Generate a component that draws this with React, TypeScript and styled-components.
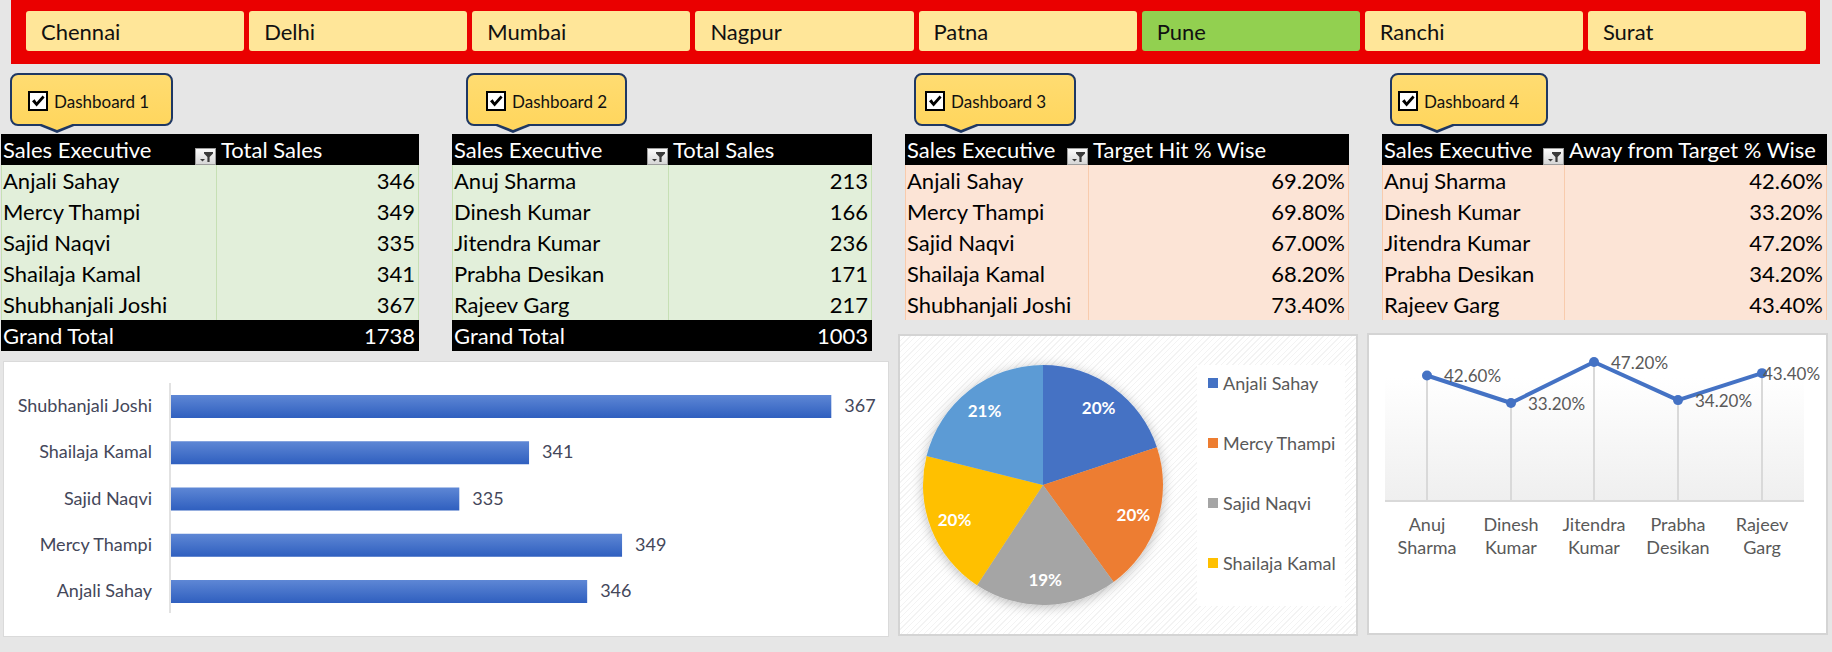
import React from "react";
import styled, { createGlobalStyle } from "styled-components";

const GlobalStyle = createGlobalStyle`
  html, body { margin: 0; padding: 0; }
  body { background: #e6e6e6; font-family: Lato, "Open Sans", sans-serif; }
`;

const Page = styled.div`
  width: 1832px;
  height: 652px;
  background: #e6e6e6;
  overflow: hidden;
`;

/* ---------- top city slicer ---------- */
const CityBar = styled.nav`
  margin-left: 11px;
  width: 1809px;
  height: 64px;
  box-sizing: border-box;
  background: #ea0000;
  padding: 11px 14px 0 15px;
  display: flex;
  gap: 5px;
`;

const CityButton = styled.div<{ $active?: boolean }>`
  flex: 1;
  height: 40px;
  box-sizing: border-box;
  border-radius: 3px;
  background: ${(p) => (p.$active ? "#92d050" : "#ffe699")};
  display: flex;
  align-items: center;
  padding-left: 15px;
  font-size: 22px;
  color: #111;
`;

/* ---------- layout ---------- */
const Main = styled.div`
  display: flex;
  align-items: flex-start;
  margin-top: 9px;
  padding-left: 1px;
`;

const Column = styled.div<{ $w: number; $ml?: number }>`
  width: ${(p) => p.$w}px;
  margin-left: ${(p) => p.$ml ?? 0}px;
  flex-shrink: 0;
  display: flex;
  flex-direction: column;
`;

const TablePair = styled.div`
  display: flex;
  gap: 33px;
`;

const CalloutSlot = styled.div<{ $pl: number }>`
  height: 61px;
  padding-left: ${(p) => p.$pl}px;
  box-sizing: border-box;
`;

/* ---------- callout ---------- */
const Bubble = styled.div<{ $w: number; $pl: number }>`
  position: relative;
  width: ${(p) => p.$w}px;
  height: 53px;
  box-sizing: border-box;
  border: 2px solid #1f3864;
  border-radius: 8px;
  background: linear-gradient(#ffdc72, #ffd65e);
  display: flex;
  align-items: center;
  gap: 6px;
  padding: 3px 0 0 ${(p) => p.$pl}px;
  font-size: 17px;
  color: #111;
  &::before {
    content: "";
    position: absolute;
    left: 23px;
    bottom: -9px;
    border-left: 22px solid transparent;
    border-right: 22px solid transparent;
    border-top: 9px solid #1f3864;
  }
  &::after {
    content: "";
    position: absolute;
    left: 27px;
    bottom: -6px;
    border-left: 18px solid transparent;
    border-right: 18px solid transparent;
    border-top: 7px solid #ffd65e;
  }
`;

const CheckBox = styled.span`
  width: 20px;
  height: 20px;
  box-sizing: border-box;
  border: 2px solid #000;
  background: #fff;
  display: flex;
  align-items: center;
  justify-content: center;
  flex-shrink: 0;
`;

const Callout = ({ label, w, pl }: { label: string; w: number; pl: number }) => (
  <Bubble $w={w} $pl={pl}>
    <CheckBox>
      <svg width="16" height="16" viewBox="0 0 16 16">
        <path d="M2 8.2 L4.6 6.2 L6.6 9.2 L12.6 2.4 L14.6 4.4 L6.6 13.4 Z" fill="#000" />
      </svg>
    </CheckBox>
    <span>{label}</span>
  </Bubble>
);

/* ---------- pivot tables ---------- */
type Tone = "green" | "peach";
const tones: Record<Tone, { bg: string; line: string }> = {
  green: { bg: "#e2efda", line: "#c6e0b4" },
  peach: { bg: "#fce4d6", line: "#f8cbad" },
};

const TableBox = styled.div<{ $w: number; $ml?: number }>`
  width: ${(p) => p.$w}px;
  margin-left: ${(p) => p.$ml ?? 0}px;
  font-size: 22px;
  color: #000;
`;

const Row = styled.div<{ $cols: string }>`
  display: grid;
  grid-template-columns: ${(p) => p.$cols};
  height: 31px;
  line-height: 31px;
`;

const HeadRow = styled(Row)`
  background: #000;
  color: #fff;
`;

const BodyRow = styled(Row)<{ $tone: Tone }>`
  background: ${(p) => tones[p.$tone].bg};
  box-shadow: inset 1px 0 ${(p) => tones[p.$tone].line}, inset -1px 0 ${(p) => tones[p.$tone].line};
`;

const TotalRow = styled(Row)`
  background: #000;
  color: #fff;
`;

const NameCell = styled.div<{ $line?: string }>`
  padding-left: 2px;
  white-space: nowrap;
  overflow: hidden;
  border-right: 1px solid ${(p) => p.$line ?? "transparent"};
`;

const ValueCell = styled.div`
  text-align: right;
  padding-right: 4px;
  white-space: nowrap;
`;

const HeadName = styled.div`
  display: flex;
  align-items: flex-end;
  justify-content: space-between;
  padding: 0 1px 6px 2px;
  white-space: nowrap;
`;

const HeadLabel = styled.span`
  line-height: 31px;
  align-self: center;
`;

const HeadTitle = styled.div`
  padding-left: 4px;
  white-space: nowrap;
  overflow: hidden;
`;

const FilterButton = styled.span`
  width: 21px;
  height: 17px;
  box-sizing: border-box;
  border: 1px solid #9c9c9c;
  background: linear-gradient(#fbfbfb, #d6d6d6);
  display: flex;
  align-items: center;
  justify-content: center;
`;

const FilterIcon = () => (
  <FilterButton>
    <svg width="19" height="15" viewBox="0 0 19 15">
      <polygon points="8,3 17,3 17,4.6 13.6,8 13.6,13 11.4,13 11.4,8 8,4.6" fill="#3a3a3a" />
      <polygon points="4,10 9,10 6.5,12.6" fill="#3a3a3a" />
    </svg>
  </FilterButton>
);

type TableProps = {
  w: number;
  ml?: number;
  c1: number;
  title: string;
  tone: Tone;
  rows: [string, string][];
  total?: string;
};

const PivotTable = ({ w, ml, c1, title, tone, rows, total }: TableProps) => {
  const cols = `${c1}px 1fr`;
  return (
    <TableBox $w={w} $ml={ml}>
      <HeadRow $cols={cols}>
        <HeadName>
          <HeadLabel>Sales Executive</HeadLabel>
          <FilterIcon />
        </HeadName>
        <HeadTitle>{title}</HeadTitle>
      </HeadRow>
      {rows.map(([n, v]) => (
        <BodyRow key={n} $cols={cols} $tone={tone}>
          <NameCell $line={tones[tone].line}>{n}</NameCell>
          <ValueCell>{v}</ValueCell>
        </BodyRow>
      ))}
      {total && (
        <TotalRow $cols={cols}>
          <NameCell>Grand Total</NameCell>
          <ValueCell>{total}</ValueCell>
        </TotalRow>
      )}
    </TableBox>
  );
};

/* ---------- chart panels ---------- */
const BarPanel = styled.div`
  margin: 10px 0 0 2px;
  width: 886px;
  height: 276px;
  box-sizing: border-box;
  background: #fff;
  border: 1px solid #dadada;
`;

const PiePanel = styled.div`
  margin-top: 14px;
  width: 460px;
  height: 302px;
  box-sizing: border-box;
  border: 2px solid #d4d4d4;
  background: repeating-linear-gradient(135deg, #ffffff 0 3px, #f3f3f3 3px 4px);
  display: flex;
  align-items: flex-start;
`;

const LinePanel = styled.div`
  margin-top: 13px;
  width: 461px;
  height: 302px;
  box-sizing: border-box;
  border: 2px solid #d4d4d4;
  background: #fff;
`;

const ChartSvg = styled.svg`
  display: block;
  overflow: visible;
`;

const AxisText = styled.text<{ $muted?: boolean }>`
  font-family: Lato, "Open Sans", sans-serif;
  font-size: 18px;
  fill: ${(p) => (p.$muted ? "#595959" : "#44475a")};
`;

const DataText = styled.text`
  font-family: Lato, "Open Sans", sans-serif;
  font-size: 17px;
  fill: #595959;
`;

const SliceText = styled.text`
  font-family: Lato, "Open Sans", sans-serif;
  font-size: 17px;
  font-weight: 700;
  fill: #fff;
`;

const Legend = styled.div`
  margin-top: 29px;
  width: 148px;
  height: 241px;
  box-sizing: border-box;
  background: #fff;
  padding: 6px 0 0 11px;
  display: flex;
  flex-direction: column;
  gap: 36px;
`;

const LegendItem = styled.div`
  height: 24px;
  display: flex;
  align-items: center;
  gap: 5px;
  font-size: 18px;
  color: #595959;
  white-space: nowrap;
`;

const Swatch = styled.span<{ $c: string }>`
  width: 10px;
  height: 10px;
  background: ${(p) => p.$c};
  flex-shrink: 0;
`;

/* ---------- data ---------- */
const cities = ["Chennai", "Delhi", "Mumbai", "Nagpur", "Patna", "Pune", "Ranchi", "Surat"];

const t1: [string, string][] = [
  ["Anjali Sahay", "346"],
  ["Mercy Thampi", "349"],
  ["Sajid Naqvi", "335"],
  ["Shailaja Kamal", "341"],
  ["Shubhanjali Joshi", "367"],
];
const t2: [string, string][] = [
  ["Anuj Sharma", "213"],
  ["Dinesh Kumar", "166"],
  ["Jitendra Kumar", "236"],
  ["Prabha Desikan", "171"],
  ["Rajeev Garg", "217"],
];
const t3: [string, string][] = [
  ["Anjali Sahay", "69.20%"],
  ["Mercy Thampi", "69.80%"],
  ["Sajid Naqvi", "67.00%"],
  ["Shailaja Kamal", "68.20%"],
  ["Shubhanjali Joshi", "73.40%"],
];
const t4: [string, string][] = [
  ["Anuj Sharma", "42.60%"],
  ["Dinesh Kumar", "33.20%"],
  ["Jitendra Kumar", "47.20%"],
  ["Prabha Desikan", "34.20%"],
  ["Rajeev Garg", "43.40%"],
];

const barData: [string, number][] = [
  ["Shubhanjali Joshi", 367],
  ["Shailaja Kamal", 341],
  ["Sajid Naqvi", 335],
  ["Mercy Thampi", 349],
  ["Anjali Sahay", 346],
];

const pieData = [
  { name: "Anjali Sahay", v: 346, c: "#4472c4" },
  { name: "Mercy Thampi", v: 349, c: "#ed7d31" },
  { name: "Sajid Naqvi", v: 335, c: "#a5a5a5" },
  { name: "Shailaja Kamal", v: 341, c: "#ffc000" },
  { name: "Shubhanjali Joshi", v: 367, c: "#5b9bd5" },
];

const lineData = [
  { top: "Anuj", bottom: "Sharma", v: 42.6, label: "42.60%" },
  { top: "Dinesh", bottom: "Kumar", v: 33.2, label: "33.20%" },
  { top: "Jitendra", bottom: "Kumar", v: 47.2, label: "47.20%" },
  { top: "Prabha", bottom: "Desikan", v: 34.2, label: "34.20%" },
  { top: "Rajeev", bottom: "Garg", v: 43.4, label: "43.40%" },
];

/* ---------- charts ---------- */
const BarChart = () => (
  <BarPanel>
    <ChartSvg width="884" height="274">
      <defs>
        <linearGradient id="barGrad" x1="0" y1="0" x2="0" y2="1">
          <stop offset="0" stopColor="#5e87d5" />
          <stop offset="1" stopColor="#2f5fbf" />
        </linearGradient>
      </defs>
      <line x1="166" y1="21" x2="166" y2="251" stroke="#d9d9d9" strokeWidth="1.5" />
      {barData.map(([n, v], i) => {
        const y = 33 + i * 46.25;
        const w = (v - 310.2) * 11.625;
        return (
          <g key={n}>
            <rect x={167} y={y} width={w} height={23} fill="url(#barGrad)" />
            <AxisText x={148} y={y + 10} textAnchor="end" dominantBaseline="central">
              {n}
            </AxisText>
            <AxisText x={167 + w + 13} y={y + 10} dominantBaseline="central">
              {v}
            </AxisText>
          </g>
        );
      })}
    </ChartSvg>
  </BarPanel>
);

const polar = (cx: number, cy: number, r: number, a: number) => {
  const rad = (a * Math.PI) / 180;
  return [cx + r * Math.sin(rad), cy - r * Math.cos(rad)];
};

const PieChart = () => {
  const total = pieData.reduce((s, d) => s + d.v, 0);
  const cx = 143;
  const cy = 149;
  const r = 120;
  let acc = 0;
  const slices = pieData.map((d) => {
    const a0 = (acc / total) * 360;
    acc += d.v;
    const a1 = (acc / total) * 360;
    const [x0, y0] = polar(cx, cy, r, a0);
    const [x1, y1] = polar(cx, cy, r, a1);
    const large = a1 - a0 > 180 ? 1 : 0;
    const mid = (a0 + a1) / 2;
    const [lx, ly] = polar(cx, cy, 95, mid);
    return {
      ...d,
      path: `M${cx} ${cy} L${x0} ${y0} A${r} ${r} 0 ${large} 1 ${x1} ${y1} Z`,
      lx,
      ly,
      pct: `${Math.round((d.v / total) * 100)}%`,
    };
  });
  return (
    <PiePanel>
      <ChartSvg width="297" height="298">
        <defs>
          <filter id="pieShadow" x="-20%" y="-20%" width="140%" height="140%">
            <feDropShadow dx="0" dy="2" stdDeviation="6" floodColor="#000" floodOpacity="0.28" />
          </filter>
        </defs>
        <g filter="url(#pieShadow)">
          {slices.map((s) => (
            <path key={s.name} d={s.path} fill={s.c} />
          ))}
        </g>
        {slices.map((s) => (
          <SliceText key={s.name} x={s.lx} y={s.ly} textAnchor="middle" dominantBaseline="central">
            {s.pct}
          </SliceText>
        ))}
      </ChartSvg>
      <Legend>
        {pieData.slice(0, 4).map((d) => (
          <LegendItem key={d.name}>
            <Swatch $c={d.c} />
            {d.name}
          </LegendItem>
        ))}
      </Legend>
    </PiePanel>
  );
};

const LineChart = () => {
  const xs = [58, 142, 225, 309, 393];
  const yOf = (v: number) => 165.3 - 2.93 * v;
  const pts = lineData.map((d, i) => [xs[i], yOf(d.v)]);
  return (
    <LinePanel>
      <ChartSvg width="457" height="298">
        <defs>
          <linearGradient id="plotGrad" x1="0" y1="0" x2="0" y2="1">
            <stop offset="0" stopColor="#ffffff" />
            <stop offset="1" stopColor="#efefef" />
          </linearGradient>
        </defs>
        <rect x={16} y={43} width={419} height={123} fill="url(#plotGrad)" />
        {pts.map(([x, y], i) => (
          <line key={i} x1={x} y1={y} x2={x} y2={166} stroke="#d9d9d9" strokeWidth="2" />
        ))}
        <line x1={16} y1={166} x2={435} y2={166} stroke="#d9d9d9" strokeWidth="2" />
        <polyline
          points={pts.map((p) => p.join(",")).join(" ")}
          fill="none"
          stroke="#4472c4"
          strokeWidth="4"
          strokeLinejoin="round"
        />
        {pts.map(([x, y], i) => (
          <circle key={i} cx={x} cy={y} r={5} fill="#4472c4" />
        ))}
        {lineData.map((d, i) => (
          <DataText key={d.label} x={i === 4 ? xs[i] + 1 : xs[i] + 17} y={yOf(d.v)} dominantBaseline="central">
            {d.label}
          </DataText>
        ))}
        {lineData.map((d, i) => (
          <g key={d.top + i}>
            <AxisText $muted x={xs[i]} y={189} textAnchor="middle" dominantBaseline="central">
              {d.top}
            </AxisText>
            <AxisText $muted x={xs[i]} y={212} textAnchor="middle" dominantBaseline="central">
              {d.bottom}
            </AxisText>
          </g>
        ))}
      </ChartSvg>
    </LinePanel>
  );
};

/* ---------- app ---------- */
export default function App() {
  return (
    <Page>
      <GlobalStyle />
      <CityBar>
        {cities.map((c) => (
          <CityButton key={c} $active={c === "Pune"}>
            {c}
          </CityButton>
        ))}
      </CityBar>
      <Main>
        <Column $w={888}>
          <TablePair>
            <Column $w={418}>
              <CalloutSlot $pl={9}>
                <Callout label="Dashboard 1" w={163} pl={16} />
              </CalloutSlot>
              <PivotTable w={418} c1={216} title="Total Sales" tone="green" rows={t1} total="1738" />
            </Column>
            <Column $w={420}>
              <CalloutSlot $pl={14}>
                <Callout label="Dashboard 2" w={161} pl={18} />
              </CalloutSlot>
              <PivotTable w={420} c1={217} title="Total Sales" tone="green" rows={t2} total="1003" />
            </Column>
          </TablePair>
          <BarChart />
        </Column>
        <Column $w={460} $ml={9}>
          <CalloutSlot $pl={16}>
            <Callout label="Dashboard 3" w={162} pl={9} />
          </CalloutSlot>
          <PivotTable w={444} ml={7} c1={184} title="Target Hit % Wise" tone="peach" rows={t3} />
          <PieChart />
        </Column>
        <Column $w={461} $ml={9}>
          <CalloutSlot $pl={23}>
            <Callout label="Dashboard 4" w={158} pl={6} />
          </CalloutSlot>
          <PivotTable w={445} ml={15} c1={183} title="Away from Target % Wise" tone="peach" rows={t4} />
          <LineChart />
        </Column>
      </Main>
    </Page>
  );
}
